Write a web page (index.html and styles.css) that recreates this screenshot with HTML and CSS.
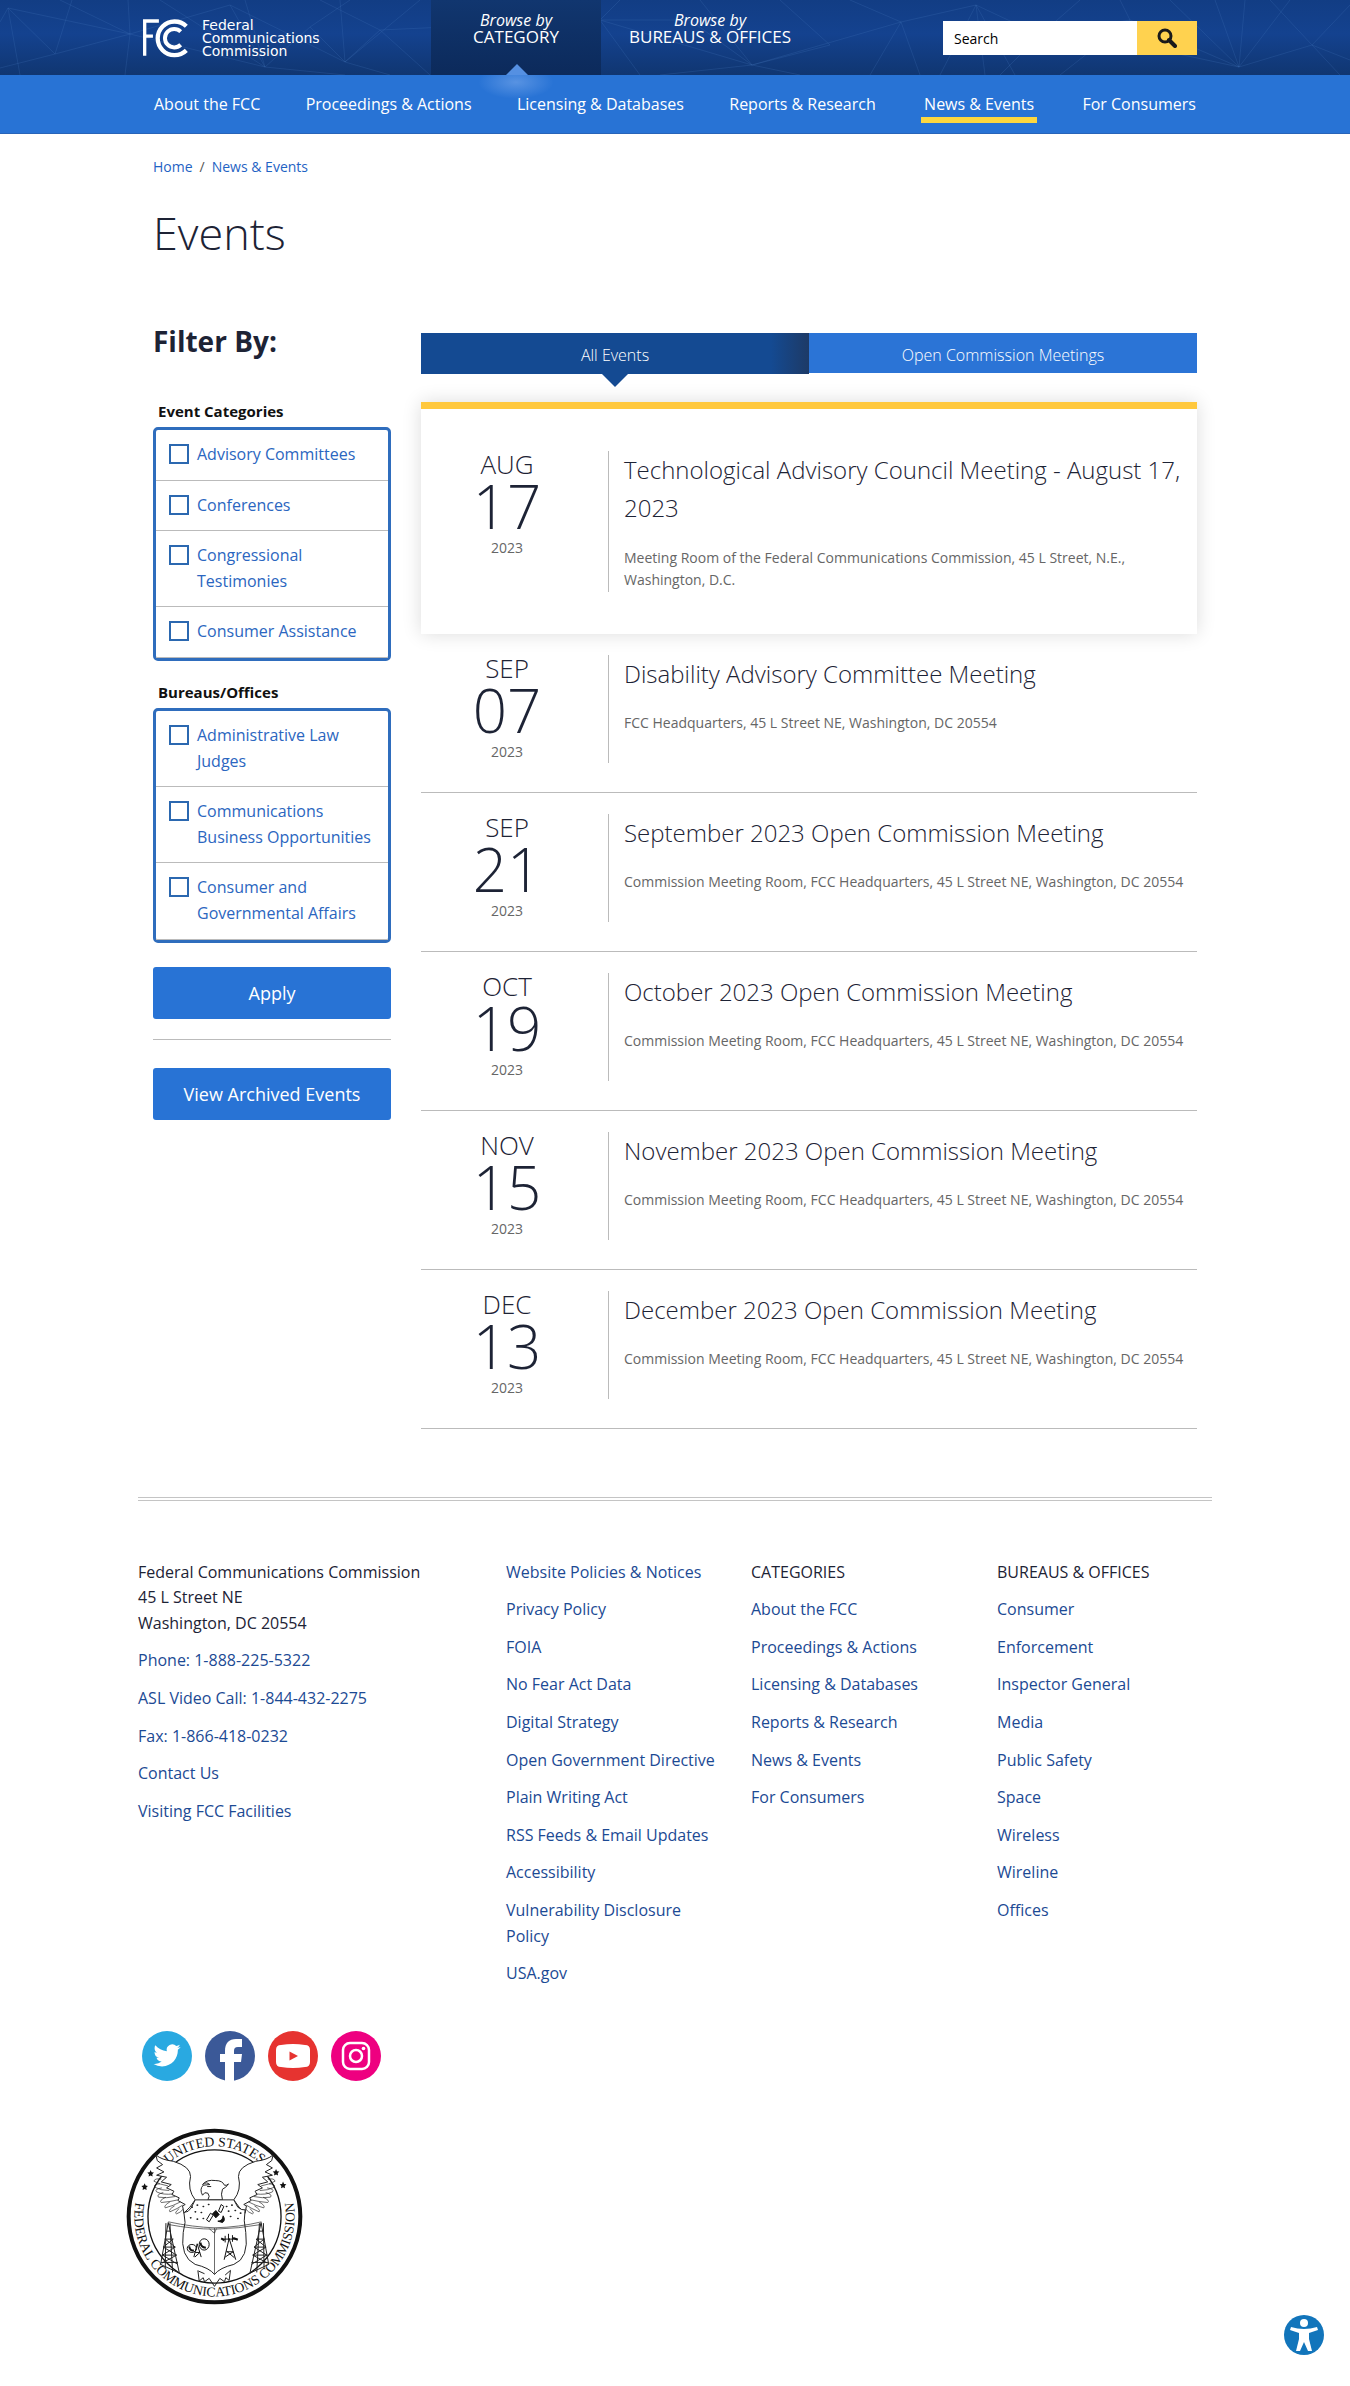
FILE: index.html
```html
<!DOCTYPE html>
<html lang="en">
<head>
<meta charset="utf-8">
<meta name="viewport" content="width=device-width, initial-scale=1">
<title>Events | Federal Communications Commission</title>
<link rel="stylesheet" href="styles.css">
</head>
<body>
<header class="masthead">
  <svg class="masthead-web" viewBox="0 0 1350 75" preserveAspectRatio="xMidYMid slice" aria-hidden="true">
    <path d="M0 22L8 8L130 34L265 67L310 27L350 0M8 8L55 54L72 0M8 8L20 75M55 54L0 68M55 54L130 34L60 0M130 34L128 0M130 34L125 75M130 34L230 5L265 67L160 0M265 67L245 0M265 67L345 75M230 5L345 62L420 0M310 27L345 62L380 30L320 0M380 30L430 75M345 62L340 0M345 62L390 75M380 30L600 20L640 75M600 20L585 75M600 20L620 0M600 20L752 65L700 0M752 65L690 20L600 20M752 65L660 75M752 65L830 45L780 0M752 65L901 22L976 5L1040 35L1130 20L1239 67L1312 45L1350 60M752 65L800 75M901 22L850 0M901 22L870 75M901 22L920 75M976 5L940 75M976 5L985 75M976 5L1015 75M1040 35L1000 75M1040 35L1080 0M1130 20L1060 75M1130 20L1120 0M1239 67L1170 0M1239 67L1215 0M1239 67L1245 0M1239 67L1290 0M1239 67L1160 50L1040 35M1312 45L1270 0M1312 45L1350 5M1312 45L1340 75"/>
  </svg>
  <div class="masthead-inner">
    <a class="brand" href="#">
      <svg class="brand-mark" viewBox="428 56 136 118" aria-hidden="true">
        <path d="M433 167V62H476M433 108H458" fill="none" stroke="#fff" stroke-width="10"/>
        <path d="M559 78A51 51 0 1 0 559 151" fill="none" stroke="#fff" stroke-width="13"/>
        <path d="M542 94A28 28 0 1 0 542 134" fill="none" stroke="#fff" stroke-width="12"/>
      </svg>
      <span class="brand-name">Federal<br>Communications<br>Commission</span>
    </a>
    <nav class="browse" aria-label="Browse">
      <a class="browse-tab is-open" href="#"><i>Browse by</i><span>CATEGORY</span></a>
      <a class="browse-tab" href="#"><i>Browse by</i><span>BUREAUS &amp; OFFICES</span></a>
    </nav>
    <form class="search" role="search">
      <input type="text" placeholder="Search" aria-label="Search">
      <button type="submit" aria-label="Search">
        <svg viewBox="0 0 20 20" aria-hidden="true"><circle cx="8" cy="8" r="6" fill="none" stroke="#1a1a1a" stroke-width="3"/><path d="M12 12L18 18" stroke="#1a1a1a" stroke-width="4" stroke-linecap="round"/></svg>
      </button>
    </form>
  </div>
</header>
<nav class="primary" aria-label="Main">
  <div class="primary-inner">
    <a href="#">About the FCC</a>
    <a href="#">Proceedings &amp; Actions</a>
    <a href="#">Licensing &amp; Databases</a>
    <a href="#">Reports &amp; Research</a>
    <a href="#" class="is-current">News &amp; Events</a>
    <a href="#">For Consumers</a>
  </div>
</nav>

<main class="page">
  <nav class="crumbs" aria-label="Breadcrumb"><a href="#">Home</a><span>/</span><a href="#">News &amp; Events</a></nav>
  <h1>Events</h1>
  <div class="columns">
    <aside class="filters">
      <h2>Filter By:</h2>
      <form>
        <fieldset>
          <legend>Event Categories</legend>
          <div class="options">
            <label><input type="checkbox"><span>Advisory Committees</span></label>
            <label><input type="checkbox"><span>Conferences</span></label>
            <label><input type="checkbox"><span>Congressional Testimonies</span></label>
            <label><input type="checkbox"><span>Consumer Assistance</span></label>
          </div>
        </fieldset>
        <fieldset>
          <legend>Bureaus/Offices</legend>
          <div class="options">
            <label><input type="checkbox"><span>Administrative Law Judges</span></label>
            <label><input type="checkbox"><span>Communications Business Opportunities</span></label>
            <label><input type="checkbox"><span>Consumer and Governmental Affairs</span></label>
          </div>
        </fieldset>
        <button class="button" type="submit">Apply</button>
      </form>
      <hr>
      <a class="button" href="#">View Archived Events</a>
    </aside>

    <section class="events">
      <nav class="tabs" aria-label="Event lists">
        <a href="#" class="is-current">All Events</a>
        <a href="#">Open Commission Meetings</a>
      </nav>
      <article class="event featured">
        <time class="date" datetime="2023-08-17"><span class="month">AUG</span><span class="day">17</span><span class="year">2023</span></time>
        <div class="details"><h3><a href="#">Technological Advisory Council Meeting - August 17, 2023</a></h3><p>Meeting Room of the Federal Communications Commission, 45 L Street, N.E., Washington, D.C.</p></div>
      </article>
      <article class="event">
        <time class="date" datetime="2023-09-07"><span class="month">SEP</span><span class="day">07</span><span class="year">2023</span></time>
        <div class="details"><h3><a href="#">Disability Advisory Committee Meeting</a></h3><p>FCC Headquarters, 45 L Street NE, Washington, DC 20554</p></div>
      </article>
      <article class="event">
        <time class="date" datetime="2023-09-21"><span class="month">SEP</span><span class="day">21</span><span class="year">2023</span></time>
        <div class="details"><h3><a href="#">September 2023 Open Commission Meeting</a></h3><p>Commission Meeting Room, FCC Headquarters, 45 L Street NE, Washington, DC 20554</p></div>
      </article>
      <article class="event">
        <time class="date" datetime="2023-10-19"><span class="month">OCT</span><span class="day">19</span><span class="year">2023</span></time>
        <div class="details"><h3><a href="#">October 2023 Open Commission Meeting</a></h3><p>Commission Meeting Room, FCC Headquarters, 45 L Street NE, Washington, DC 20554</p></div>
      </article>
      <article class="event">
        <time class="date" datetime="2023-11-15"><span class="month">NOV</span><span class="day">15</span><span class="year">2023</span></time>
        <div class="details"><h3><a href="#">November 2023 Open Commission Meeting</a></h3><p>Commission Meeting Room, FCC Headquarters, 45 L Street NE, Washington, DC 20554</p></div>
      </article>
      <article class="event">
        <time class="date" datetime="2023-12-13"><span class="month">DEC</span><span class="day">13</span><span class="year">2023</span></time>
        <div class="details"><h3><a href="#">December 2023 Open Commission Meeting</a></h3><p>Commission Meeting Room, FCC Headquarters, 45 L Street NE, Washington, DC 20554</p></div>
      </article>
    </section>
  </div>
</main>

<footer class="footer">
  <div class="footer-columns">
    <ul>
      <li>Federal Communications Commission<br>45 L Street NE<br>Washington, DC 20554</li>
      <li><a href="#">Phone: 1-888-225-5322</a></li>
      <li><a href="#">ASL Video Call: 1-844-432-2275</a></li>
      <li><a href="#">Fax: 1-866-418-0232</a></li>
      <li><a href="#">Contact Us</a></li>
      <li><a href="#">Visiting FCC Facilities</a></li>
    </ul>
    <ul>
      <li><a href="#">Website Policies &amp; Notices</a></li>
      <li><a href="#">Privacy Policy</a></li>
      <li><a href="#">FOIA</a></li>
      <li><a href="#">No Fear Act Data</a></li>
      <li><a href="#">Digital Strategy</a></li>
      <li><a href="#">Open Government Directive</a></li>
      <li><a href="#">Plain Writing Act</a></li>
      <li><a href="#">RSS Feeds &amp; Email Updates</a></li>
      <li><a href="#">Accessibility</a></li>
      <li><a href="#">Vulnerability Disclosure Policy</a></li>
      <li><a href="#">USA.gov</a></li>
    </ul>
    <ul>
      <li>CATEGORIES</li>
      <li><a href="#">About the FCC</a></li>
      <li><a href="#">Proceedings &amp; Actions</a></li>
      <li><a href="#">Licensing &amp; Databases</a></li>
      <li><a href="#">Reports &amp; Research</a></li>
      <li><a href="#">News &amp; Events</a></li>
      <li><a href="#">For Consumers</a></li>
    </ul>
    <ul>
      <li>BUREAUS &amp; OFFICES</li>
      <li><a href="#">Consumer</a></li>
      <li><a href="#">Enforcement</a></li>
      <li><a href="#">Inspector General</a></li>
      <li><a href="#">Media</a></li>
      <li><a href="#">Public Safety</a></li>
      <li><a href="#">Space</a></li>
      <li><a href="#">Wireless</a></li>
      <li><a href="#">Wireline</a></li>
      <li><a href="#">Offices</a></li>
    </ul>
  </div>
  <div class="social">
    <a href="#" aria-label="Twitter"><svg viewBox="0 0 50 50"><circle cx="25" cy="25" r="25" fill="#29a9e1"/><path transform="translate(11.500 10.800) scale(1.130)" fill="#fff" d="M23.950 4.570a10 10 0 01-2.820.770 4.960 4.960 0 002.160-2.720c-.950.550-2 .950-3.130 1.180a4.920 4.920 0 00-8.380 4.480C7.690 8.100 4.070 6.130 1.640 3.160a4.820 4.820 0 00-.670 2.480c0 1.710.870 3.210 2.190 4.100a4.900 4.900 0 01-2.230-.620v.060a4.920 4.920 0 003.950 4.830 5 5 0 01-2.210.080 4.940 4.940 0 004.600 3.420A9.870 9.870 0 010 19.540a13.990 13.990 0 007.550 2.210c9.050 0 14-7.500 14-13.980 0-.210 0-.420-.020-.630a9.940 9.940 0 002.460-2.550z"/></svg></a>
    <a href="#" aria-label="Facebook"><svg viewBox="0 0 50 50"><circle cx="25" cy="25" r="25" fill="#3b5998"/><path fill="#fff" d="M20 50V31H15V23H20V20C20 12 24 8 31 8H37V16H33C30 16 29 17.500 29 20V23H37L36 31H29V50Z"/></svg></a>
    <a href="#" aria-label="YouTube"><svg viewBox="0 0 50 50"><circle cx="25" cy="25" r="25" fill="#e63330"/><path fill="#fff" d="M13 14Q25 12 37 14Q42 14 42 19V31Q42 36 37 36Q25 38 13 36Q8 36 8 31V19Q8 14 13 14Z"/><path fill="#e63330" d="M21.500 20.500L30 25L21.500 29.500Z"/></svg></a>
    <a href="#" aria-label="Instagram"><svg viewBox="0 0 50 50"><circle cx="25" cy="25" r="25" fill="#ee0080"/><g fill="none" stroke="#fff" stroke-width="2.500"><rect x="12" y="12" width="26" height="26" rx="7"/><circle cx="25" cy="25" r="6"/></g><circle cx="32.500" cy="17.500" r="1.800" fill="#fff"/></svg></a>
  </div>
  <svg class="seal" viewBox="48 52 532 532" role="img" aria-label="Seal of the Federal Communications Commission">
    <defs>
      <path id="arc-top" d="M103 318A211 211 0 0 1 525 318"/>
      <path id="arc-bottom" d="M128 164A241 241 0 1 0 500 164"/>
      <path id="star" d="M0-11L3-4L10-3L5 2L6 9L0 6L-6 9L-5 2L-10-3L-3-4Z"/>
    </defs>
    <circle cx="314" cy="318" r="258" fill="#fff" stroke="#111" stroke-width="12"/>
    <circle cx="314" cy="318" r="200" fill="none" stroke="#111" stroke-width="4"/>
    <text class="seal-text"><textPath href="#arc-top" startOffset="50%">UNITED STATES</textPath></text>
    <text class="seal-text"><textPath href="#arc-bottom" startOffset="50%">FEDERAL COMMUNICATIONS COMMISSION</textPath></text>
    <g fill="#111"><use href="#star" x="122" y="189"/><use href="#star" x="104" y="229"/><use href="#star" x="499" y="186"/><use href="#star" x="520" y="224"/></g>
    <g fill="#fff" stroke="#222" stroke-width="3" stroke-linejoin="round">
      <g id="wing">
        <path d="M138 133Q155 148 190 152Q243 168 242 198Q232 238 256 268L240 290L222 308L218 286L226 282L204 270L208 262L186 252L192 242L170 232L184 222L154 214L170 200L140 194L162 184L140 172L158 162L142 150Z"/>
        <path fill="none" stroke-width="2" d="M154 206Q134 202 132 212Q150 222 174 226M150 220Q130 220 134 230Q154 240 178 240M156 232Q132 236 140 244Q160 254 190 250M160 246Q138 252 146 260Q170 264 196 258M168 260Q146 270 154 276Q180 274 204 268M180 274Q160 286 166 292Q190 286 212 274M194 286Q174 298 180 304Q204 294 218 284M208 294Q192 308 200 310Q212 306 220 296"/>
      </g>
      <use href="#wing" transform="translate(628 0) scale(-1 1)"/>
      <path d="M294 268Q302 256 294 248Q284 242 278 254Q268 236 280 224L300 222Q290 212 278 222Q290 206 318 210Q338 210 344 224Q350 226 356 220Q348 232 338 236Q332 250 338 268Z"/>
      <path fill="none" d="M292 228H304M264 480L268 512L280 502L284 514L298 504L314 528L330 504L344 514L348 502L358 510L362 480L346 494M266 482L284 490"/>
      <path d="M256 268H372L384 290Q396 300 406 298Q400 330 408 366Q418 444 372 462Q330 472 314 492Q298 472 256 462Q210 440 220 366Q230 336 222 306Q236 306 244 292Z"/>
      <path fill="none" stroke-width="2" d="M175 334Q250 350 314 352Q390 350 455 334M175 342Q250 356 314 356Q390 354 455 342M314 352V492M298 354L306 362L314 368L320 354"/>
    </g>
    <g id="tower" fill="none" stroke="#222" stroke-width="3">
      <path d="M175 336L152 462M175 336L208 486M168 338L166 476M180 338L188 486M170 362H182M164 386H190M160 410H196M156 434H200M153 456H204M166 386L196 410L158 434L204 462M190 386L160 410L200 434L156 458M152 462L208 488"/>
    </g>
    <use href="#tower" transform="translate(629 0) scale(-1 1)"/>
    <g stroke="#111" stroke-width="3" fill="none">
      <path d="M252 440L262 400L274 440M256 426H270M255 440L270 426M343 448L358 384L378 448M350 424H370M346 440L370 424M350 422L374 442M336 386H382M346 376V396M368 374V394M356 370V388"/>
      <ellipse cx="246" cy="414" rx="14" ry="12"/><ellipse cx="283" cy="402" rx="15" ry="17"/>
      <path stroke-width="6" d="M238 408Q240 422 252 420M272 396Q272 410 288 412M334 384L344 390M370 382L384 388"/>
      <path fill="#fff" d="M290 328L302 308L310 314L298 334ZM326 302L334 282L342 288L334 306Z"/><path fill="#111" d="M308 310L318 300L328 312L318 322ZM324 332Q338 332 340 316Q348 330 338 336Z"/>
    </g>
    <path d="M246 290h1M262 284h1M280 288h1M296 282h1M256 304h1M274 306h1M242 322h1M262 326h1M280 324h1M350 288h1M366 284h1M356 302h1M376 300h1M362 318h1M384 324h1M392 308h1" stroke="#222" stroke-width="5" stroke-linecap="round"/>
  </svg>
</footer>
<button class="access" type="button" aria-label="Accessibility options">
  <svg viewBox="0 0 40 40" aria-hidden="true"><circle cx="20" cy="20" r="20" fill="#1275bb"/><circle cx="20" cy="8" r="4" fill="#fff"/><path fill="#fff" d="M7 12Q20 16 33 12L34 15L25 18V24L28 36H24L20 27L16 36H12L15 24V18L6 15Z"/></svg>
</button>
</body>
</html>
```
FILE: styles.css
```css
* { box-sizing: border-box; }
body {
  margin: 0;
  font-family: "Open Sans", "Noto Sans", sans-serif;
  font-size: 16px;
  line-height: 1.6;
  color: #1d2335;
  background: #fff;
}
a { color: inherit; text-decoration: none; }
svg { display: block; }

/* Masthead */
.masthead {
  position: relative;
  background: linear-gradient(#123d84, #14428f 45%, #103671);
}
.masthead-web {
  position: absolute;
  inset: 0;
  width: 100%;
  height: 100%;
  fill: none;
  stroke: #4a7cc0;
  stroke-opacity: .22;
}
.masthead-inner {
  position: relative;
  display: flex;
  max-width: 1074px;
  height: 75px;
  margin: 0 auto;
  padding: 0 15px 0 5px;
}
.brand {
  display: flex;
  flex: 0 0 288px;
  gap: 14px;
  padding-top: 19px;
  color: #fff;
}
.brand-mark { width: 45px; height: 39px; }
.brand-name { font: 14px/13px "DejaVu Sans", sans-serif; }
.browse { display: flex; }
.browse-tab {
  display: flex;
  flex-direction: column;
  align-items: center;
  padding: 11px 28px 0;
  font-size: 17px;
  line-height: 16px;
  color: #fff;
}
.browse-tab i { font-size: 16px; line-height: 18px; }
.browse-tab.is-open {
  position: relative;
  width: 170px;
  background: linear-gradient(#11366f, #0c2a5b);
}
.browse-tab.is-open::after {
  content: "";
  position: absolute;
  bottom: 0;
  left: calc(50% - 10px);
  border: solid transparent;
  border-width: 0 11px 11px;
  border-bottom-color: #5590e2;
}
.browse-tab.is-open::before {
  content: "";
  position: absolute;
  z-index: 1;
  top: 75px;
  left: calc(50% - 38px);
  width: 76px;
  height: 24px;
  background: radial-gradient(ellipse at 50% 30%, rgba(120, 168, 235, .6), transparent 70%);
}
.search {
  display: flex;
  width: 254px;
  height: 34px;
  margin: 21px 0 0 auto;
}
.search input {
  flex: 1;
  min-width: 0;
  padding: 0 11px;
  border: 0;
  border-radius: 0;
  font: 14px "Open Sans", sans-serif;
}
.search input::placeholder { color: #000; opacity: 1; }
.search button {
  display: grid;
  place-items: center;
  width: 60px;
  border: 0;
  background: #ffd24f;
}
.search svg { width: 20px; height: 20px; }

/* Primary navigation */
.primary {
  background: #2873d5;
  border-bottom: 1px solid #2864b8;
  color: #fff;
}
.primary-inner {
  display: flex;
  justify-content: space-between;
  max-width: 1044px;
  height: 58px;
  margin: 0 auto;
  padding: 17px 1px 0;
}
.primary-inner a { height: 31px; }
.primary-inner .is-current {
  padding: 0 3px;
  border-bottom: 6px solid #fdd73f;
}

/* Page */
.page {
  max-width: 1044px;
  margin: 0 auto;
  padding-top: 22px;
}
.crumbs {
  display: flex;
  gap: 7px;
  font-size: 14px;
  line-height: 22px;
  color: #555;
}
.crumbs a { color: #1f63c4; }
h1 {
  margin: 27px 0 60px;
  font-size: 45px;
  font-weight: 300;
  line-height: 56px;
}
.columns {
  display: grid;
  grid-template-columns: 238px minmax(0, 1fr);
  gap: 30px;
}

/* Filters */
.filters h2 {
  margin: 0 0 38px;
  font-size: 28px;
  line-height: 40px;
}
fieldset { min-width: 0; margin: 0 0 19px; padding: 0; border: 0; }
legend {
  padding: 0 5px 4px;
  font-size: 15px;
  font-weight: 700;
  line-height: 24px;
  color: #111;
}
.options {
  border: 3px solid #2f6dbd;
  border-radius: 5px;
}
.options label {
  display: flex;
  gap: 8px;
  padding: 12px 8px 12px 13px;
  border-bottom: 1px solid #bbb;
  color: #2b66c0;
}
.options input {
  flex: none;
  appearance: none;
  width: 20px;
  height: 20px;
  margin: 2px 0 0;
  border: 2px solid #2b68b0;
  background: #fff;
}
.button {
  display: block;
  width: 100%;
  padding: 13px 0;
  border: 0;
  border-radius: 3px;
  font: 18px/26px "Open Sans", sans-serif;
  text-align: center;
  color: #fff;
  background: #2873d5;
}
form .button { margin-top: 24px; }
.filters hr {
  margin: 20px 0 28px;
  border: 0;
  border-top: 1px solid #bbb;
}

/* Events */
.events { padding-top: 12px; }
.tabs {
  display: grid;
  grid-template-columns: 1fr 1fr;
  margin-bottom: 28px;
  color: #fff;
  font-weight: 300;
  line-height: 40px;
  text-align: center;
}
.tabs a { height: 40px; padding-top: 2px; background: #2b74d6; }
.tabs .is-current {
  position: relative;
  height: 41px;
  background: linear-gradient(to left, #1d3a66, #144a92 38px);
}
.tabs .is-current::after {
  content: "";
  position: absolute;
  top: 41px;
  left: calc(50% - 13px);
  border: solid transparent;
  border-width: 13px 13px 0;
  border-top-color: #144a92;
}
.event {
  display: grid;
  grid-template-columns: 172px minmax(0, 1fr);
  gap: 15px;
  padding: 21px 0 29px;
  border-bottom: 1px solid #bbb;
}
.event.featured {
  padding: 42px 0;
  border-top: 7px solid #ffc83d;
  border-bottom: 0;
  box-shadow: 0 0 18px rgba(0, 0, 0, .14);
}
.date {
  display: flex;
  flex-direction: column;
  align-items: center;
  font-weight: 300;
}
.month { font-size: 26px; line-height: 27px; }
.day { margin: 2px 0 5px; font-size: 60px; line-height: 52px; }
.year { font-size: 14px; font-weight: 400; line-height: 22px; color: #666; }
.details { padding-left: 15px; border-left: 1px solid #bbb; }
.details h3 { margin: 0 0 19px; font-size: 24px; font-weight: 300; }
.details p { margin: 0; font-size: 14px; color: #666; }

/* Footer */
.footer {
  max-width: 1074px;
  margin: 68px auto 0;
  padding: 59px 0 81px;
  border-top: 4px double #c4c4c4;
}
.footer-columns {
  display: grid;
  grid-template-columns: 368fr 245fr 246fr 215fr;
}
.footer ul { margin: 0; padding: 0 30px 0 0; list-style: none; }
.footer li { margin-bottom: 12px; }
.footer li a { color: #1c4a94; }
.social {
  display: flex;
  gap: 13px;
  padding: 32px 0 0 4px;
}
.social svg { width: 50px; height: 50px; }
.seal { width: 177px; height: 177px; margin: 47px 0 0 -12px; }
.seal-text {
  font: 41px "Liberation Serif", serif;
  text-anchor: middle;
  fill: #111;
}
.access {
  position: fixed;
  right: 26px;
  bottom: 31px;
  padding: 0;
  border: 0;
  background: none;
}
.access svg { width: 40px; height: 40px; }
```
